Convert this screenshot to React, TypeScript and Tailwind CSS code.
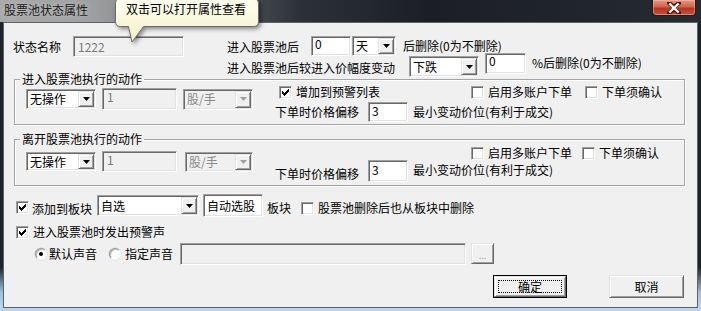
import React from "react";

const SUNKEN =
  "border border-t-[#a0a0a0] border-l-[#a0a0a0] border-b-white border-r-white shadow-[inset_1px_1px_0_#696969,inset_-1px_-1px_0_#e3e3e3]";
const RAISED =
  "border border-t-[#e3e3e3] border-l-[#e3e3e3] border-b-[#696969] border-r-[#696969] shadow-[inset_1px_1px_0_#ffffff,inset_-1px_-1px_0_#a0a0a0] bg-[#f0f0f0]";

function TextBox({ cls, value, disabled, pad }: { cls: string; value?: string; disabled?: boolean; pad?: string }) {
  return (
    <div
      className={`${cls} ${SUNKEN} shrink-0 flex items-start ${pad ?? "pl-[3px] pt-[2px]"} ${
        disabled ? "bg-[#f0f0f0] text-[#7a7a7a]" : "bg-white text-black"
      }`}
    >
      {value}
    </div>
  );
}

function Combo({ cls, text, disabled }: { cls: string; text: string; disabled?: boolean }) {
  return (
    <div className={`${cls} ${SUNKEN} shrink-0 flex p-[1px] ${disabled ? "bg-[#f0f0f0]" : "bg-white"}`}>
      <div className={`flex-1 pl-[2px] flex items-center ${disabled ? "text-[#8a8a8a]" : "text-black"}`}>{text}</div>
      <div className={`w-[16px] h-full flex items-center justify-center ${RAISED}`}>
        <svg width="7" height="4" viewBox="0 0 7 4">
          <path d="M0 0H7L3.5 4Z" fill={disabled ? "#a0a0a0" : "#000"} />
        </svg>
      </div>
    </div>
  );
}

function Check({ checked }: { checked?: boolean }) {
  return (
    <div className={`w-[13px] h-[13px] bg-white ${SUNKEN} shrink-0 flex items-center justify-center`}>
      {checked && (
        <svg width="7" height="7" viewBox="0 0 7 7" shapeRendering="crispEdges">
          <path d="M6 0H7V3H6V4H5V5H4V6H3V7H2V6H1V5H0V2H1V3H2V4H3V3H4V2H5V1H6Z" fill="#000" />
        </svg>
      )}
    </div>
  );
}

function CheckItem({ checked, label, cls }: { checked?: boolean; label: string; cls?: string }) {
  return (
    <div className={`flex items-center ${cls ?? ""}`}>
      <Check checked={checked} />
      <span className="ml-[4px] whitespace-nowrap">{label}</span>
    </div>
  );
}

function Radio({ checked }: { checked?: boolean }) {
  return (
    <div className="w-[12px] h-[12px] rounded-full bg-white border border-t-[#9a9a9a] border-l-[#9a9a9a] border-b-[#ffffff] border-r-[#ffffff] shadow-[inset_1px_1px_0_#b8b8b8,0_0_0_0.5px_#d0d0d0] shrink-0 flex items-center justify-center">
      {checked && <div className="w-[4px] h-[4px] rounded-full bg-black" />}
    </div>
  );
}

function TitleBar() {
  return (
    <div className="h-[22px] shrink-0 flex items-start justify-between bg-[linear-gradient(90deg,#a9a9a9_0px,#9d9ea0_95px,#63676c_200px,#2c3138_300px,#1b1f25_430px,#262b31_100%)]">
      <span className="ml-[4px] mt-[3px] text-[#1c1c1c] whitespace-nowrap [text-shadow:0_0_6px_#d0d0d0]">股票池状态属性</span>
      <div className="mr-[5px] w-[44px] h-[16px] rounded-b-[4px] border border-t-0 border-[#3a120b] bg-[linear-gradient(to_bottom,#e39a88_0%,#d0634b_45%,#b4351f_55%,#c4543a_100%)] shadow-[inset_0_0_0_1px_rgba(255,200,190,0.45)] flex items-center justify-center">
        <svg width="14" height="12" viewBox="0 0 14 12">
          <path
            d="M2 1 L7 5 L12 1 M2 11 L7 7 L12 11"
            stroke="#4a1a10"
            strokeWidth="4.2"
            fill="none"
            strokeLinecap="round"
          />
          <path d="M2.3 1.5 L11.7 10.5 M11.7 1.5 L2.3 10.5" stroke="#ffffff" strokeWidth="2.4" fill="none" />
        </svg>
      </div>
    </div>
  );
}

function Balloon() {
  return (
    <div className="absolute left-[113px] top-[-3px] w-[150px] h-[50px]">
      <svg width="150" height="50" viewBox="0 0 150 50" className="absolute left-0 top-0 drop-shadow-[2px_2px_2px_rgba(0,0,0,0.45)]">
        <defs>
          <linearGradient id="bg" x1="0" y1="0" x2="0" y2="1">
            <stop offset="0" stopColor="#fffff2" />
            <stop offset="1" stopColor="#f4f0c6" />
          </linearGradient>
        </defs>
        <path
          d="M7.5 1.5 H140.5 Q145.5 1.5 145.5 6.5 V24.5 Q145.5 29.5 140.5 29.5 H30.5 L19 45 L15.5 29.5 H7.5 Q2.5 29.5 2.5 24.5 V6.5 Q2.5 1.5 7.5 1.5 Z"
          fill="url(#bg)"
          stroke="#6a6a6a"
          strokeWidth="1"
        />
      </svg>
      <span className="absolute left-[13px] top-[5px] whitespace-nowrap text-black">双击可以打开属性查看</span>
    </div>
  );
}

function Group({ title, cls, children }: { title: string; cls: string; children: React.ReactNode }) {
  return (
    <fieldset className={`${cls} ml-[10px] mr-[12px] border border-[#a5a5a5] shadow-[1px_1px_0_#ffffff,inset_1px_1px_0_#ffffff]`}>
      <legend className="ml-[5px] px-[2px] leading-[12px] bg-[#f0f0f0] whitespace-nowrap">{title}</legend>
      {children}
    </fieldset>
  );
}

export default function App() {
  return (
    <div className="relative w-[701px] h-[311px] overflow-hidden flex flex-col font-['Noto_Sans_CJK_SC','Noto_Sans',sans-serif] text-[12px] leading-[14px] text-black bg-[linear-gradient(to_bottom,#1f242a_0%,#1f242a_86%,#9fbfdc_94%,#c4dbef_100%)]">
      <TitleBar />
      <div className="mx-[3px] h-[286px] shrink-0 border border-[#5d636b] bg-[#f0f0f0] flex flex-col">
        {/* top rows */}
        <div className="flex items-start mt-[13px]">
          <div className="flex items-center ml-[9px]">
            <span className="w-[60px] whitespace-nowrap">状态名称</span>
            <TextBox cls="w-[111px] h-[21px]" value="1222" disabled pad="pl-[4px] pt-[3px]" />
          </div>
          <div className="ml-[43px] flex flex-col">
            <div className="flex items-start h-[20px]">
              <span className="w-[84px] mt-[4px] whitespace-nowrap">进入股票池后</span>
              <TextBox cls="w-[40px] h-[20px]" value="0" pad="pl-[3px] pt-[0px]" />
              <Combo cls="ml-[1px] w-[44px] h-[20px]" text="天" />
              <span className="ml-[7px] mt-[4px] leading-[12px] whitespace-nowrap">后删除(0为不删除)</span>
            </div>
            <div className="flex items-start -mt-[3px]">
              <span className="w-[182px] mt-[8px] whitespace-nowrap">进入股票池后较进入价幅度变动</span>
              <Combo cls="mt-[3px] w-[70px] h-[21px]" text="下跌" />
              <TextBox cls="ml-[6px] w-[41px] h-[21px] leading-[12px]" value="0" pad="pl-[3px] pt-[1px]" />
              <span className="ml-[6px] mt-[3px] whitespace-nowrap">%后删除(0为不删除)</span>
            </div>
          </div>
        </div>

        {/* group 1 */}
        <Group title="进入股票池执行的动作" cls="-mt-[4px] pb-[2px]">
          <div className="flex items-start">
            <div className="ml-[11px] mt-[3px] h-[22px] flex items-center">
              <Combo cls="w-[70px] h-[20px]" text="无操作" />
              <TextBox cls="ml-[6px] w-[75px] h-[22px]" value="1" disabled pad="pl-[4px] pt-[1px]" />
              <Combo cls="ml-[6px] w-[70px] h-[21px]" text="股/手" disabled />
            </div>
            <div className="ml-[22px] flex flex-col">
              <div className="flex items-center h-[14px] pl-[4px]">
                <CheckItem checked label="增加到预警列表" cls="w-[192px]" />
                <CheckItem label="启用多账户下单" cls="w-[114px]" />
                <CheckItem label="下单须确认" />
              </div>
              <div className="flex items-center mt-[3px] h-[20px]">
                <span className="w-[93px] whitespace-nowrap">下单时价格偏移</span>
                <TextBox cls="w-[40px] h-[20px]" value="3" pad="pl-[3px] pt-[1px]" />
                <span className="ml-[5px] whitespace-nowrap">最小变动价位(有利于成交)</span>
              </div>
            </div>
          </div>
        </Group>

        {/* group 2 */}
        <Group title="离开股票池执行的动作" cls="mt-[8px] pb-[3px]">
          <div className="flex items-start">
            <div className="ml-[11px] mt-[6px] h-[21px] flex items-center">
              <Combo cls="w-[70px] h-[19px]" text="无操作" />
              <TextBox cls="ml-[6px] w-[75px] h-[21px]" value="1" disabled pad="pl-[4px] pt-[1px]" />
              <Combo cls="ml-[8px] w-[68px] h-[20px]" text="股/手" disabled />
            </div>
            <div className="ml-[22px] flex flex-col">
              <div className="flex items-center h-[14px] mt-[1px] pl-[196px]">
                <CheckItem label="启用多账户下单" cls="w-[111px]" />
                <CheckItem label="下单须确认" />
              </div>
              <div className="flex items-start">
                <span className="w-[93px] mt-[7px] whitespace-nowrap">下单时价格偏移</span>
                <TextBox cls="w-[40px] h-[22px]" value="3" pad="pl-[3px] pt-[2px]" />
                <span className="ml-[5px] mt-[3px] whitespace-nowrap">最小变动价位(有利于成交)</span>
              </div>
            </div>
          </div>
        </Group>

        {/* add to block */}
        <div className="flex items-start mt-[8px] ml-[12px]">
          <div className="mt-[7px]">
            <Check checked />
          </div>
          <span className="ml-[3px] mt-[8px] whitespace-nowrap">添加到板块</span>
          <Combo cls="ml-[5px] mt-[1px] w-[102px] h-[21px]" text="自选" />
          <div className={`ml-[4px] w-[60px] h-[23px] ${SUNKEN} bg-white flex items-center pl-[3px] whitespace-nowrap`}>
            自动选股
          </div>
          <span className="ml-[4px] mt-[7px] whitespace-nowrap">板块</span>
          <div className="ml-[10px] mt-[7px]">
            <CheckItem label="股票池删除后也从板块中删除" />
          </div>
        </div>

        {/* alarm sound */}
        <div className="flex items-center h-[14px] mt-[8px] ml-[12px]">
          <CheckItem checked label="进入股票池时发出预警声" />
        </div>

        <div className="flex items-center h-[22px] mt-[4px] ml-[31px]">
          <Radio checked />
          <span className="ml-[2px] whitespace-nowrap">默认声音</span>
          <div className="ml-[12px]">
            <Radio />
          </div>
          <span className="ml-[4px] whitespace-nowrap">指定声音</span>
          <TextBox cls="ml-[7px] w-[286px] h-[22px]" disabled />
          <div className={`ml-[5px] w-[23px] h-[21px] self-start ${RAISED} flex items-end justify-center pb-[3px] text-[9px] leading-[9px] text-[#a0a0a0]`}>
            ...
          </div>
        </div>

        {/* buttons */}
        <div className="flex items-start mt-[10px] ml-[489px]">
          <div className="w-[74px] h-[23px] border border-black">
            <div className={`w-full h-full ${RAISED} p-[3px]`}>
              <div className="w-full h-full border border-dotted border-black flex items-center justify-center">确定</div>
            </div>
          </div>
          <div className={`ml-[42px] w-[75px] h-[23px] ${RAISED} flex items-center justify-center`}>取消</div>
        </div>
      </div>
      <div className="flex-1 bg-[#bcd4ea]" />
      <Balloon />
    </div>
  );
}
